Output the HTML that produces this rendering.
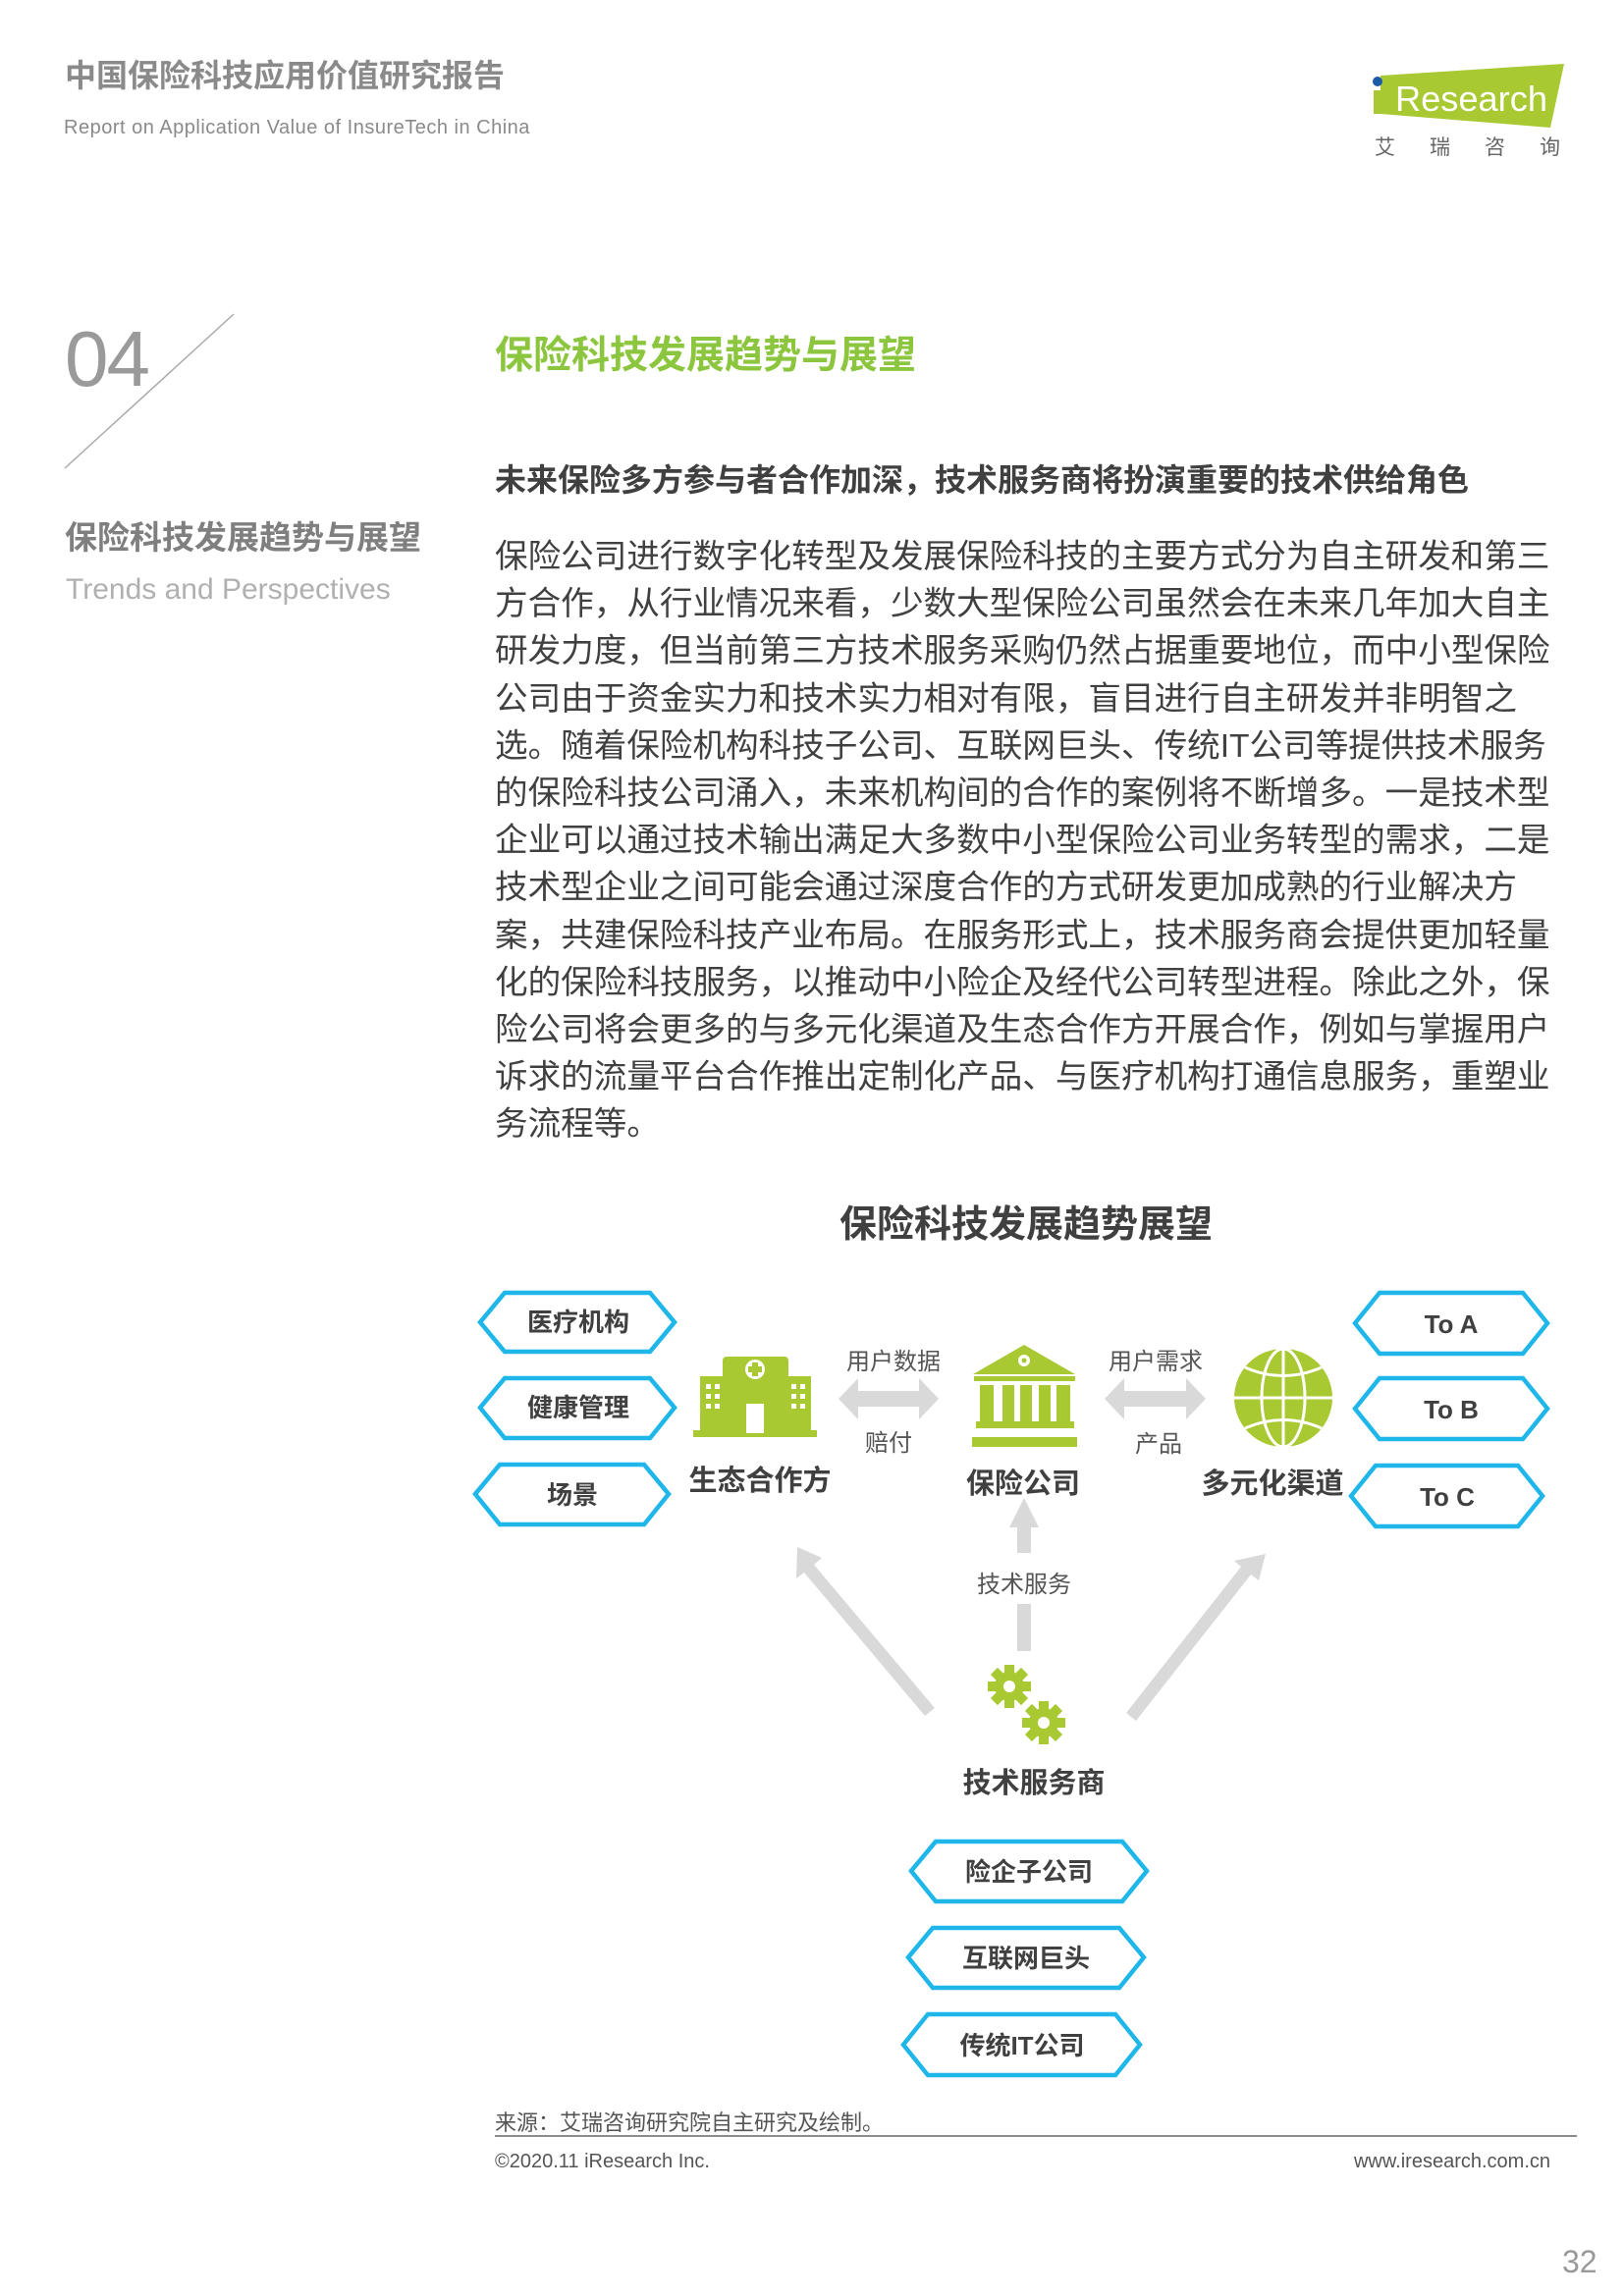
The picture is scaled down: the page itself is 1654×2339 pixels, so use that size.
<!DOCTYPE html>
<html><head><meta charset="utf-8"><style>
*{margin:0;padding:0}
body{width:1654px;height:2339px;position:relative;background:#fff;font-family:"Liberation Sans","Noto Sans CJK SC",sans-serif;overflow:hidden}
.a{position:absolute;white-space:nowrap}
.body{left:504px;top:544px;font-size:33.6px;line-height:48.2px;color:#404040}
</style></head><body>
<div class="a" style="left:66px;top:52px;font-size:32px;font-weight:bold;color:#8a8a8a">中国保险科技应用价值研究报告</div>
<div class="a" style="left:65px;top:119px;font-size:20px;color:#8a8a8a;letter-spacing:0.5px">Report on Application Value of InsureTech in China</div>
<svg class="a" style="left:1380px;top:50px" width="240" height="120">
<polygon points="26,27 213,15 199,80 26,66" fill="#a8c932"/>
<circle cx="23" cy="33" r="5" fill="#1d5aa8"/>
<rect x="19" y="42" width="8" height="24" fill="#a8c932"/>
<text x="41" y="63" font-family="Liberation Sans" font-size="36" fill="#fff" textLength="155" lengthAdjust="spacingAndGlyphs">Research</text>
<text x="20" y="107" font-family="Noto Sans CJK SC" font-size="21" fill="#666" letter-spacing="35">艾瑞咨询</text>
</svg>
<div class="a" style="left:66px;top:320px;font-size:80px;color:#9a9a9a;font-weight:300;letter-spacing:-2px">04</div>
<svg class="a" style="left:0;top:0" width="300" height="500"><line x1="238" y1="320" x2="66" y2="477" stroke="#aaa" stroke-width="1.5"/></svg>
<div class="a" style="left:66px;top:521px;font-size:33px;font-weight:bold;color:#7f7f7f">保险科技发展趋势与展望</div>
<div class="a" style="left:67px;top:584px;font-size:30px;color:#b0b0b0">Trends and Perspectives</div>
<div class="a" style="left:504px;top:331px;font-size:39px;font-weight:bold;color:#8cc63f">保险科技发展趋势与展望</div>
<div class="a" style="left:504px;top:464px;font-size:32px;font-weight:bold;color:#404040">未来保险多方参与者合作加深，技术服务商将扮演重要的技术供给角色</div>
<div class="a body">保险公司进行数字化转型及发展保险科技的主要方式分为自主研发和第三<br>方合作，从行业情况来看，少数大型保险公司虽然会在未来几年加大自主<br>研发力度，但当前第三方技术服务采购仍然占据重要地位，而中小型保险<br>公司由于资金实力和技术实力相对有限，盲目进行自主研发并非明智之<br>选。随着保险机构科技子公司、互联网巨头、传统IT公司等提供技术服务<br>的保险科技公司涌入，未来机构间的合作的案例将不断增多。一是技术型<br>企业可以通过技术输出满足大多数中小型保险公司业务转型的需求，二是<br>技术型企业之间可能会通过深度合作的方式研发更加成熟的行业解决方<br>案，共建保险科技产业布局。在服务形式上，技术服务商会提供更加轻量<br>化的保险科技服务，以推动中小险企及经代公司转型进程。除此之外，保<br>险公司将会更多的与多元化渠道及生态合作方开展合作，例如与掌握用户<br>诉求的流量平台合作推出定制化产品、与医疗机构打通信息服务，重塑业<br>务流程等。</div>
<div class="a" style="left:0;width:2090px;text-align:center;top:1216px;font-size:38px;font-weight:bold;color:#404040">保险科技发展趋势展望</div>
<svg class="a" style="left:0;top:0" width="1654" height="2339" font-family="Liberation Sans, Noto Sans CJK SC, sans-serif">
<g fill="none" stroke="#1fb6ea" stroke-width="4.5">
<polygon points="489,1347 514,1317 662,1317 687,1347 662,1377 514,1377"/>
<polygon points="489,1434 514,1404 662,1404 687,1434 662,1465 514,1465"/>
<polygon points="484,1522 509,1492 656,1492 681,1522 656,1553 509,1553"/>
<polygon points="1380,1348 1405,1317 1551,1317 1576,1348 1551,1379 1405,1379"/>
<polygon points="1380,1435 1405,1404 1551,1404 1576,1435 1551,1466 1405,1466"/>
<polygon points="1376,1524 1401,1493 1546,1493 1571,1524 1546,1555 1401,1555"/>
<polygon points="928,1906 953,1876 1143,1876 1168,1906 1143,1937 953,1937"/>
<polygon points="925,1994 950,1964 1140,1964 1165,1994 1140,2025 950,2025"/>
<polygon points="920,2083 945,2052 1136,2052 1161,2083 1136,2114 945,2114"/>
</g>
<g font-size="26" font-weight="bold" fill="#404040" text-anchor="middle">
<text x="589" y="1356">医疗机构</text><text x="589" y="1443">健康管理</text><text x="583" y="1532">场景</text>
<text x="1478" y="1358">To A</text><text x="1478" y="1445">To B</text><text x="1474" y="1534">To C</text>
<text x="1048" y="1916">险企子公司</text><text x="1045" y="2004">互联网巨头</text><text x="1041" y="2093">传统IT公司</text>
</g>
<g font-size="29" font-weight="bold" fill="#404040" text-anchor="middle">
<text x="774" y="1518">生态合作方</text><text x="1042" y="1521">保险公司</text><text x="1296" y="1521">多元化渠道</text><text x="1053" y="1826">技术服务商</text>
</g>
<g font-size="24" fill="#555" text-anchor="middle">
<text x="910" y="1395">用户数据</text><text x="905" y="1478">赔付</text><text x="1177" y="1395">用户需求</text><text x="1180" y="1479">产品</text><text x="1043" y="1622">技术服务</text>
</g>
<g fill="#d9d9d9">
<polygon points="854,1425 874,1404 874,1417 936,1417 936,1404 956,1425 936,1446 936,1433 874,1433 874,1446"/>
<polygon points="1125,1425 1145,1404 1145,1417 1208,1417 1208,1404 1228,1425 1208,1446 1208,1433 1145,1433 1145,1446"/>
<polygon points="1043,1526 1058,1556 1050,1556 1050,1582 1036,1582 1036,1556 1028,1556"/>
<rect x="1036" y="1634" width="14" height="48"/>
<polygon points="812,1576 837,1587 829,1594 952,1740 942,1748 819,1602 811,1608"/>
<polygon points="1289,1583 1282,1610 1274,1604 1157,1753 1147,1745 1264,1596 1257,1590"/>
</g>
<g fill="#a8c932">
<rect x="713" y="1402" width="28" height="58"/><rect x="798" y="1402" width="28" height="58"/>
<rect x="736" y="1382" width="67" height="78" rx="4"/><rect x="706" y="1457" width="126" height="7"/>
<circle cx="769" cy="1395" r="10" fill="#fff"/><path d="M766 1388h6v4h4v6h-4v4h-6v-4h-4v-6h4z" fill="#a8c932"/>
<rect x="760" y="1430" width="18" height="30" fill="#fff"/>
<g fill="#fff"><rect x="719" y="1410" width="5" height="5"/><rect x="728" y="1410" width="5" height="5"/><rect x="719" y="1420" width="5" height="5"/><rect x="728" y="1420" width="5" height="5"/><rect x="719" y="1430" width="5" height="5"/><rect x="728" y="1430" width="5" height="5"/>
<rect x="806" y="1410" width="5" height="5"/><rect x="815" y="1410" width="5" height="5"/><rect x="806" y="1420" width="5" height="5"/><rect x="815" y="1420" width="5" height="5"/><rect x="806" y="1430" width="5" height="5"/><rect x="815" y="1430" width="5" height="5"/></g>
<polygon points="1043,1370 1095,1400 991,1400"/><circle cx="1043" cy="1386" r="6" fill="#fff"/><circle cx="1043" cy="1386" r="2.5"/>
<rect x="992" y="1402" width="103" height="5"/>
<rect x="998" y="1411" width="14" height="38"/><rect x="1021" y="1411" width="12" height="38"/><rect x="1039" y="1411" width="12" height="38"/><rect x="1058" y="1411" width="12" height="38"/><rect x="1076" y="1411" width="14" height="38"/>
<rect x="994" y="1448" width="100" height="7"/><rect x="990" y="1464" width="107" height="10"/>
</g>
<g>
<circle cx="1307" cy="1424" r="50" fill="#a8c932"/>
<g fill="none" stroke="#fff" stroke-width="3">
<ellipse cx="1307" cy="1424" rx="22" ry="50"/><line x1="1307" y1="1374" x2="1307" y2="1474"/><line x1="1257" y1="1424" x2="1357" y2="1424"/>
<path d="M1268 1393 Q1307 1410 1346 1393"/><path d="M1268 1455 Q1307 1438 1346 1455"/>
</g></g>
<g fill="#a8c932">
<g transform="translate(1028,1718)"><circle r="15"/><rect x="-5" y="-22" width="10" height="44"/><rect x="-22" y="-5" width="44" height="10"/><rect x="-5" y="-22" width="10" height="44" transform="rotate(45)"/><rect x="-5" y="-22" width="10" height="44" transform="rotate(-45)"/><circle r="6" fill="#fff"/></g>
<g transform="translate(1063,1755)"><circle r="15"/><rect x="-5" y="-22" width="10" height="44"/><rect x="-22" y="-5" width="44" height="10"/><rect x="-5" y="-22" width="10" height="44" transform="rotate(45)"/><rect x="-5" y="-22" width="10" height="44" transform="rotate(-45)"/><circle r="6" fill="#fff"/></g>
</g>
<line x1="504" y1="2176" x2="1606" y2="2176" stroke="#666" stroke-width="1.5"/>
</svg>
<div class="a" style="left:504px;top:2145px;font-size:22px;color:#555">来源：艾瑞咨询研究院自主研究及绘制。</div>
<div class="a" style="left:504px;top:2191px;font-size:20px;color:#555">©2020.11 iResearch Inc.</div>
<div class="a" style="right:75px;top:2191px;font-size:20px;color:#555">www.iresearch.com.cn</div>
<div class="a" style="left:1591px;top:2286px;font-size:32px;color:#999">32</div>
</body></html>
